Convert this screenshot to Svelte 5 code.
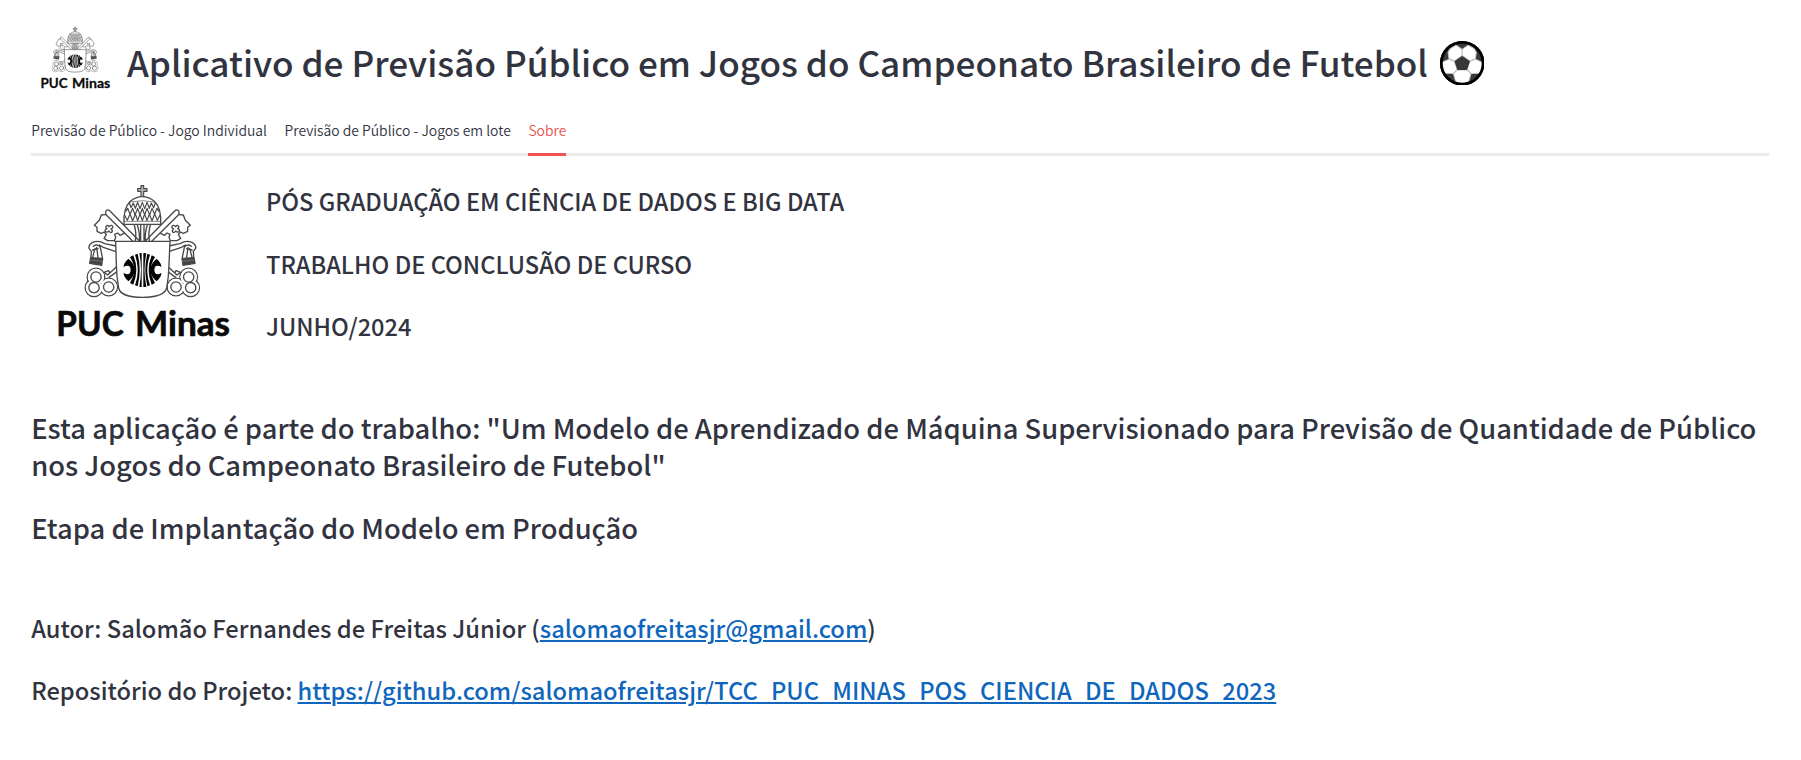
<script>
  const tabs = ['Previsão de Público - Jogo Individual', 'Previsão de Público - Jogos em lote', 'Sobre'];
  const active = 'Sobre';
  const heading = ['PÓS GRADUAÇÃO EM CIÊNCIA DE DADOS E BIG DATA', 'TRABALHO DE CONCLUSÃO DE CURSO', 'JUNHO/2024'];
  const email = 'salomaofreitasjr@gmail.com';
  const repo = 'https://github.com/salomaofreitasjr/TCC_PUC_MINAS_POS_CIENCIA_DE_DADOS_2023';
  const halves = ['', 'translate(614 0) scale(-1 1)'];
  const bows = [[168, 321], [162, 353], [206, 351]];
</script>

{#snippet logo(cls)}
  <svg class={cls} viewBox="0 0 630 540" role="img" aria-label="PUC Minas">
    <g fill="none" stroke="#484848" stroke-width="4" stroke-linejoin="round" stroke-linecap="round">
      {#each halves as transform}
        <g {transform}>
          <!-- key shaft and bit -->
          <path d="M298 213 L210 123 Q203 116 198 123 Q194 129 199 135 L278 213" />
          <path d="M197 134 L184 135 L178 151 L163 166 L171 172 L171 184 L184 190 L193 186 L199 194 L192 205 L203 212 L223 212 L227 202 L224 193 L233 189 L240 196 L252 190" />
          <path d="M199 168 q4 -5 8 2 q7 -7 11 -1 q3 4 -5 8 q6 4 3 9 q-5 4 -9 -3 q-6 6 -11 1 q-3 -5 5 -8 q-6 -4 -2 -8z" />
          <!-- tassel -->
          <path d="M228 228 L194 221 Q176 210 158 217 Q145 224 147 235 L154 244 L153 262 M228 245 L190 232 L178 225 M160 229 Q172 220 181 232 L187 262 M165 235 l-7 27 M170 232 l4 30 M158 240 l16 -4" />
          <path d="M152 263 L188 265 L185 286 L149 280z" fill="#444" />
          <path d="M152 270 L187 274" stroke="#999" stroke-width="1.5" />
          <!-- key bow -->
          <path d="M192 307 L203 315 L229 291 M207 322 L231 305 M192 307 L206 302 L209 308" />
          {#each bows as [x, y]}<circle cx={x} cy={y} r="26.5" />{/each}
          {#each bows as [x, y]}<circle cx={x} cy={y} r="24.5" fill="#fff" stroke="none" />{/each}
          {#each bows as [x, y]}<circle cx={x} cy={y} r="15.5" />{/each}
          <!-- lappets -->
          <path d="M283 165 Q290 190 286 212 M292 165 Q300 190 298 212 M302 165 V212" />
        </g>
      {/each}
      <!-- tiara -->
      <path d="M252 163 Q249 115 271 94 Q287 80 307 80 Q327 80 343 94 Q365 115 362 163z" fill="#fff" />
      <path d="M254 154 H360 M270 96 Q307 88 344 96" stroke-width="2" />
      <path stroke-width="3.5" d="M268 99 l5 14 7 -14 6 16 7 -18 7 19 7 -19 7 19 7 -19 7 18 6 -16 7 14 5 -14 M257 124 l6 -9 7 18 8 -18 7 20 8 -20 7 20 7 -20 7 20 7 -20 8 20 7 -20 8 18 7 -18 6 9 M254 136 l8 15 8 -19 8 20 8 -20 7 20 7 -20 7 20 7 -20 7 20 7 -20 8 20 8 -20 8 19 8 -15" />
      <path d="M303 78 V64 H293 V56 H303 V47 H311 V56 H321 V64 H311 V78" fill="#bbb" stroke-width="3.5" />
      <!-- shield -->
      <path d="M224 214 H390 L387 284 Q386 323 380 354 Q372 382 307 382 Q242 382 236 354 Q230 323 229 284 L227 214" fill="#fff" />
    </g>
    <svg x="250" y="249" width="115" height="102" viewBox="0 0 115 102">
      <path fill="#050505" d="M48 1 Q51 0 55 0 V102 Q51 102 48 101 Q58 51 48 1z M60 0 Q65 0 69 1 Q58 51 69 101 Q65 102 60 102z" />
      {#each ['', 'translate(115 0) scale(-1 1)'] as transform}
        <g {transform} fill="#050505">
          <path d="M35 5 Q39 3 43 2 Q55 51 43 100 Q39 99 35 97 Q52 51 35 5z" />
          <path d="M20 13 Q25 9 30 7 Q48 51 30 95 Q25 93 20 89 Q45 51 20 13z" />
          <path d="M3 32 Q8 23 15 17 Q34 32 34 51 Q34 70 15 85 Q8 79 3 70 Q22 67 22 51 Q22 34 3 32z" />
          <path d="M0 43 Q1 37 3 32 Q15 31 20 40 Q9 36 0 43z M0 59 Q1 65 3 70 Q15 71 20 62 Q9 66 0 59z" />
        </g>
      {/each}
    </svg>
    <text x="49" y="497" textLength="202" lengthAdjust="spacingAndGlyphs">PUC</text>
    <text x="285" y="497" textLength="285" lengthAdjust="spacingAndGlyphs">Minas</text>
  </svg>
{/snippet}

<main>
  <header>
    {@render logo('logo-small')}
    <h1>Aplicativo de Previsão Público em Jogos do Campeonato Brasileiro de Futebol</h1>
    <svg class="ball" viewBox="0 0 132 132" aria-hidden="true">
      <defs><clipPath id="ball-clip"><circle cx="66" cy="66" r="60" /></clipPath></defs>
      <circle cx="66" cy="66" r="66" fill="#000" />
      <g clip-path="url(#ball-clip)">
        <rect width="132" height="132" fill="#3a3a3c" />
        <g fill="#fff" stroke="#c4c4c4" stroke-width="3" stroke-linejoin="round">
          <path d="M30 23 L48 12 L66 25 V43 L43 59 L27 53 L24 34z" />
          <path d="M102 23 L84 12 L66 25 V43 L89 59 L105 53 L108 34z" />
          <path d="M27 54 L43 60 L51 84 L40 97 L16 96 L-2 74 L9 62z" />
          <path d="M105 54 L89 60 L81 84 L92 97 L116 96 L134 74 L123 62z" />
          <path d="M51 86 H81 L92 98 L84 126 L66 134 L48 126 L40 98z" />
        </g>
        <path d="M66 45 L89 61 L80 86 H52 L43 61z" fill="#38383a" />
      </g>
      <circle cx="66" cy="66" r="62" fill="none" stroke="#000" stroke-width="8" />
    </svg>
  </header>

  <nav>
    {#each tabs as tab}
      <button class:active={tab === active}>{tab}</button>
    {/each}
  </nav>

  <section class="intro">
    {@render logo('logo-big')}
    <div class="lines">
      {#each heading as line}<h4>{line}</h4>{/each}
    </div>
  </section>

  <section class="work">
    <h3>Esta aplicação é parte do trabalho: "Um Modelo de Aprendizado de Máquina Supervisionado para Previsão de Quantidade de Público nos Jogos do Campeonato Brasileiro de Futebol"</h3>
    <h3>Etapa de Implantação do Modelo em Produção</h3>
  </section>

  <section class="contact">
    <h4>Autor: Salomão Fernandes de Freitas Júnior (<a href="mailto:{email}">{email}</a>)</h4>
    <h4>Repositório do Projeto: <a href={repo}>{repo}</a></h4>
  </section>
</main>

<style>
  :global(body) { margin: 0; background: #fff; }
  main {
    box-sizing: border-box;
    height: 760px;
    overflow: hidden;
    padding: 21.3px 31.8px 0 31.2px;
    font-family: "Noto Sans CJK JP", "Noto Sans", sans-serif;
    color: #31333f;
  }
  h1, h3, h4 { margin: 0; font-weight: 500; }
  header { display: flex; align-items: flex-start; height: 98.7px; }
  .logo-small { flex: none; width: 84.3px; height: 72.3px; margin-left: 3px; }
  .logo-small text, .logo-big text { font: 700 104px Lato, sans-serif; fill: #0a0a0a; stroke: #0a0a0a; stroke-width: 2px; }
  h1 { margin: 17px 0 0 8.5px; font-size: 35.15px; line-height: 48px; white-space: nowrap; }
  .ball { flex: none; width: 44.4px; height: 44.4px; margin: 19.6px 0 0 12px; }
  nav { display: flex; gap: 17.6px; height: 36px; box-shadow: inset 0 -3px #e9e9ea; }
  button {
    padding: 0 0 13px;
    border: 0;
    border-bottom: 3px solid transparent;
    background: none;
    font: 350 13.93px/20px "Noto Sans CJK JP", sans-serif;
    color: #31333f;
    white-space: nowrap;
  }
  button.active { color: #ee5253; border-color: #ee5253; }
  .intro { display: flex; height: 252.6px; padding-top: 14px; box-sizing: border-box; }
  .logo-big { flex: none; width: 210px; height: 180px; margin-left: 8.8px; }
  .lines { display: flex; flex-direction: column; gap: 33.6px; margin: 17.2px 0 0 16px; }
  h4 { font-size: 23.7px; line-height: 29px; white-space: nowrap; }
  .lines h4 { font-size: 23.61px; }
  .work { display: flex; flex-direction: column; gap: 26.4px; }
  h3 { font-size: 27.35px; line-height: 37px; }
  .contact { display: flex; flex-direction: column; gap: 34px; margin-top: 67.2px; }
  .contact h4:first-child { font-size: 23.72px; }
  a { color: #0f66bd; text-decoration: underline; text-decoration-thickness: 2px; text-underline-offset: 2px; }
</style>
